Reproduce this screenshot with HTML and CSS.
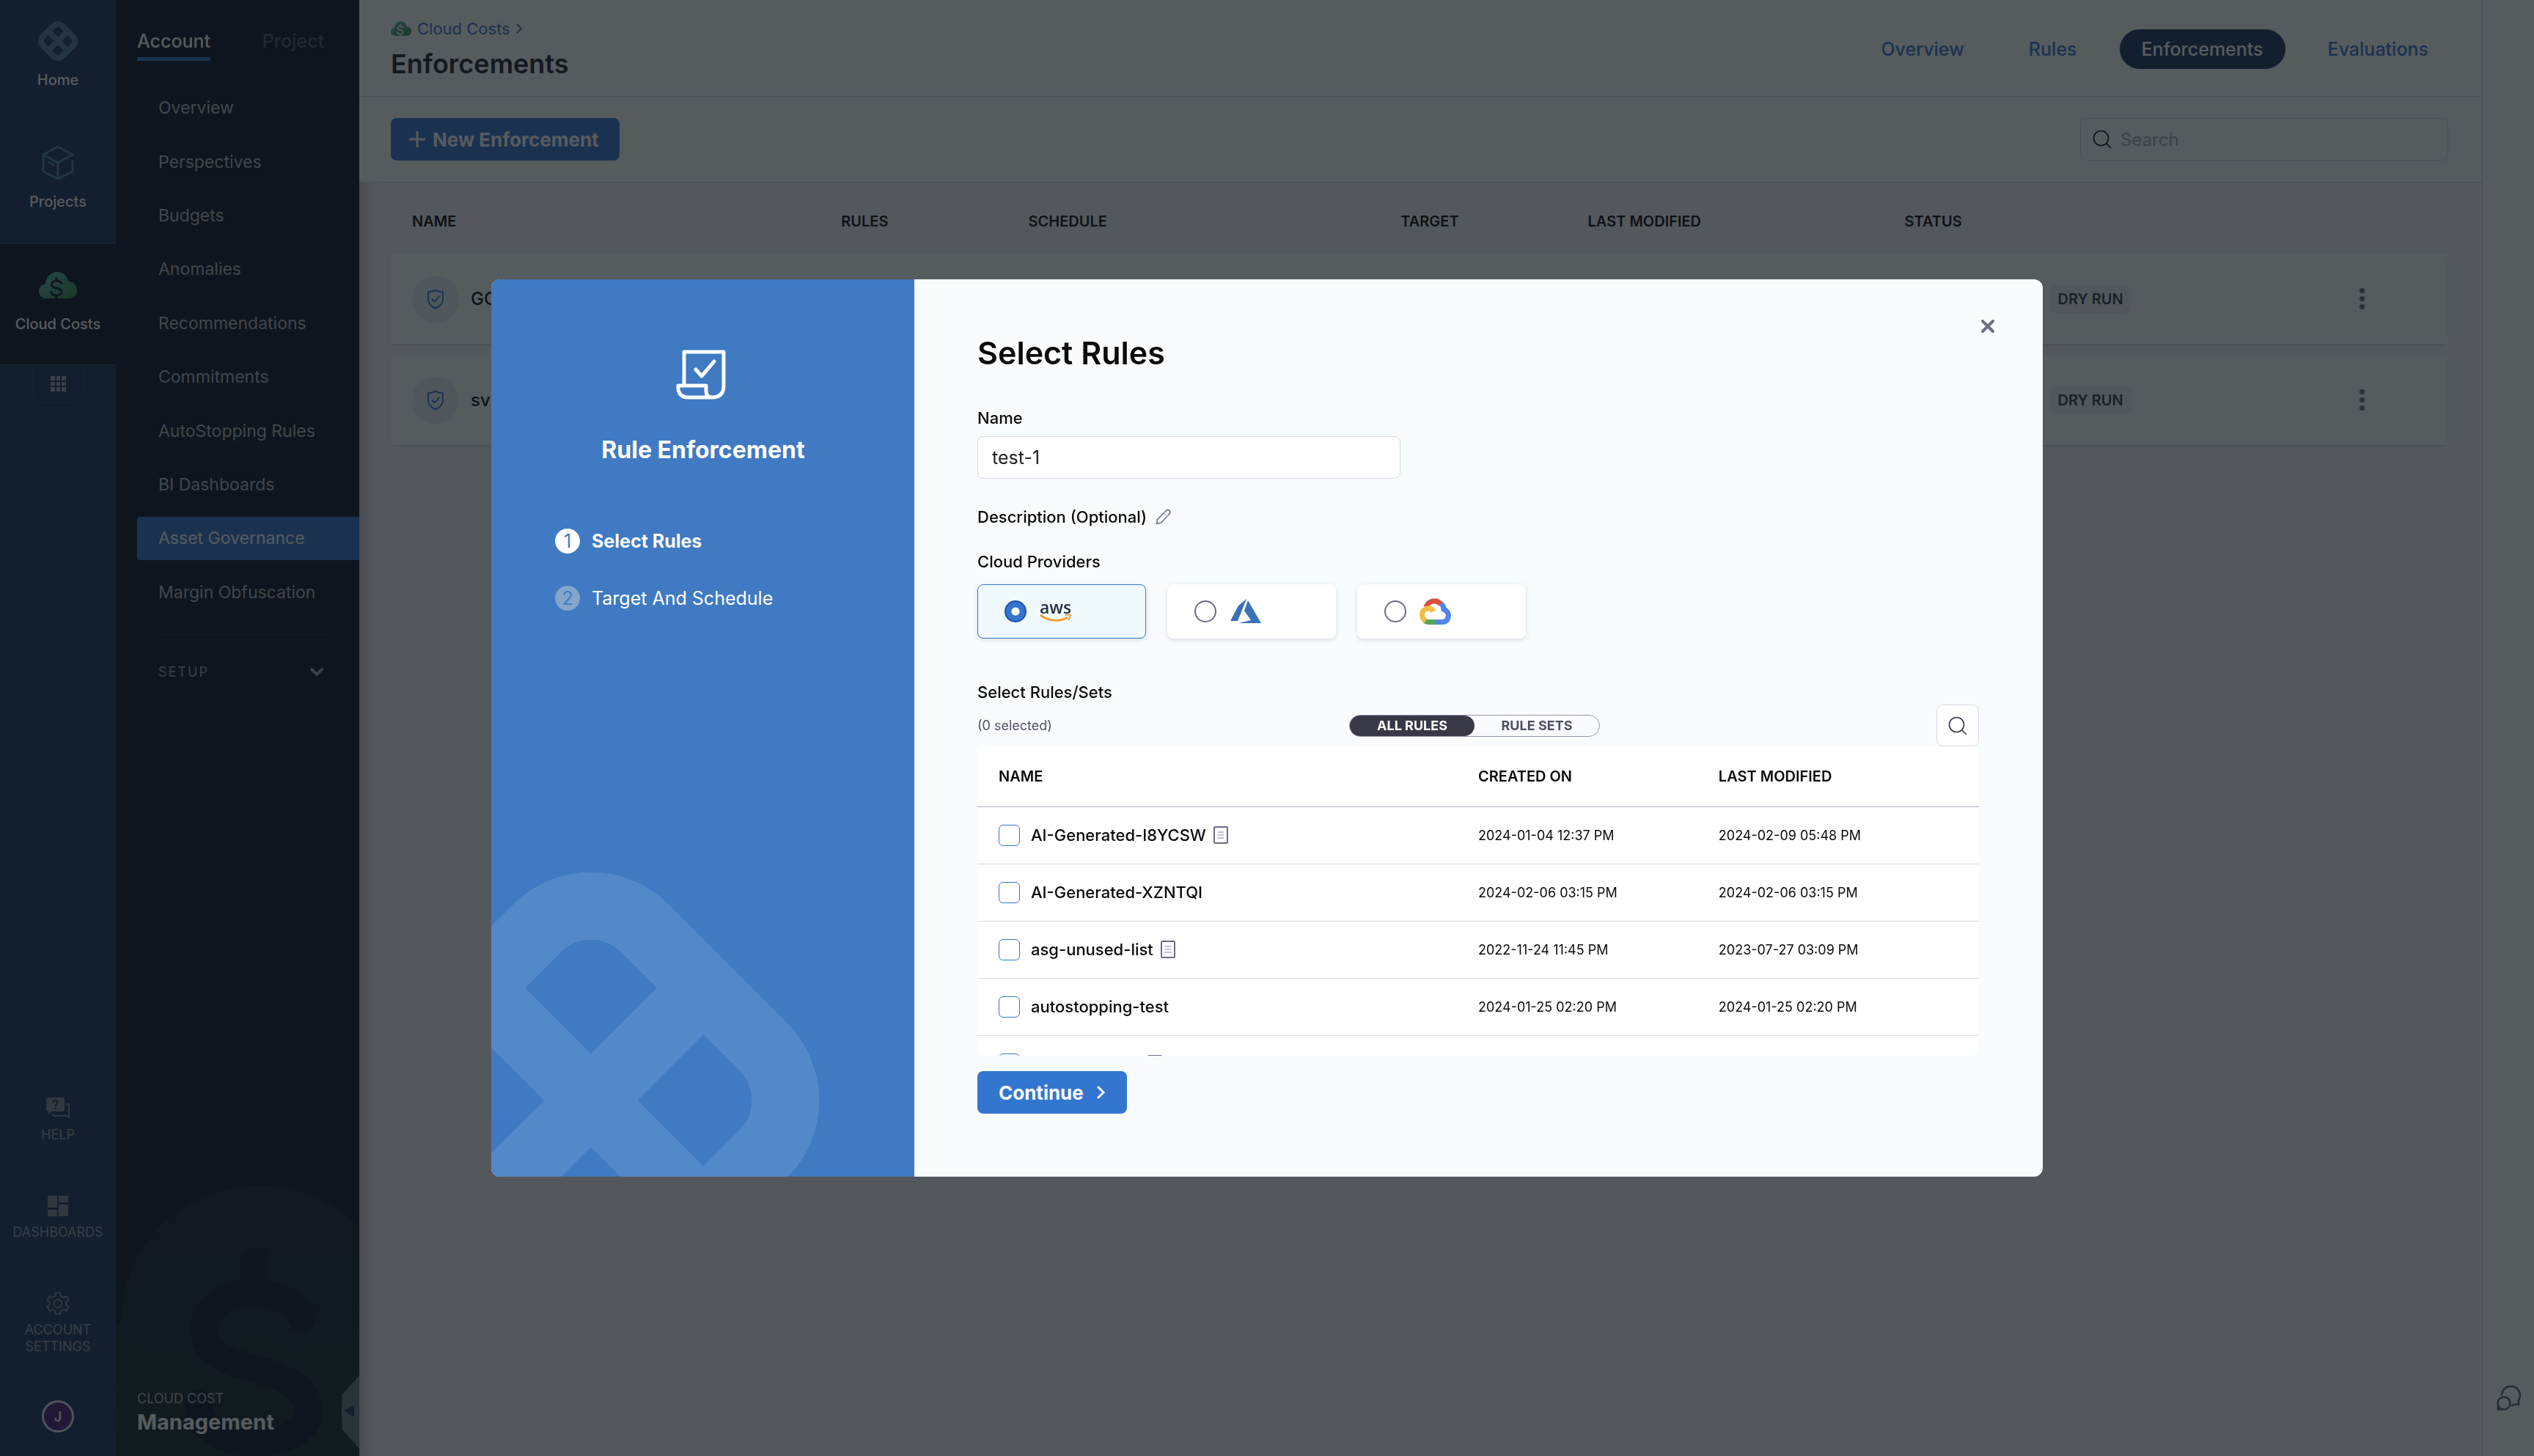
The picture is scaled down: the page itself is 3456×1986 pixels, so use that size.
FILE: index.html
```html
<!DOCTYPE html>
<html lang="en">
<head>
<meta charset="utf-8">
<title>Enforcements</title>
<meta name="viewport" content="width=device-width, initial-scale=1">
<link rel="stylesheet" href="styles.css">
</head>
<body>
<svg class="defs" aria-hidden="true">
  <defs>
    <linearGradient id="cloud-fill" x1="0" y1="0" x2="1" y2="1">
      <stop offset="0" stop-color="#5bbcc4"/><stop offset="1" stop-color="#3a8a44"/>
    </linearGradient>
    <symbol id="logo" viewBox="-312 -312 624 624">
      <g transform="rotate(45)" fill="none" stroke="currentColor">
        <rect x="-218" y="-218" width="436" height="436" rx="104" stroke-width="92"/>
        <path d="M-190 0H190M0-190V190" stroke-width="90"/>
      </g>
    </symbol>
    <symbol id="search" viewBox="0 0 26 26">
      <g fill="none" stroke="currentColor" stroke-width="1.6" stroke-linecap="round"><circle cx="11.500" cy="11.500" r="10"/><path d="M19 19l5.500 5.500"/></g>
    </symbol>
    <symbol id="shield" viewBox="0 0 24 28">
      <g fill="none" stroke="currentColor" stroke-width="2" stroke-linejoin="round" stroke-linecap="round">
        <path d="M12 1.500C9 3.500 5 4.200 2 4.200V14c0 6 4 10 10 12.500C18 24 22 20 22 14V4.200c-3 0-7-.7-10-2.700z"/><path d="M7.500 14l3.500 3.500 6-7.500"/>
      </g>
    </symbol>
    <symbol id="doc" viewBox="0 0 20 24">
      <rect x="1" y="1" width="18" height="22" rx="1" fill="none" stroke="#6b6d85" stroke-width="2"/>
      <path d="M5.500 8h9M5.500 12h9M5.500 16h9" stroke="#c3c4d4" stroke-width="2"/>
    </symbol>
    <symbol id="dollar" viewBox="0 0 18 30">
      <path d="M9 1v5M16 10.500C15 7.500 12 6 9 6c-4 0-6.500 2-6.500 5 0 7 13.500 3.500 13.500 10 0 3-3 5-7 5s-7-2-7.500-5.500M9 26v4" fill="none" stroke="currentColor" stroke-width="3"/>
    </symbol>
  </defs>
</svg>

<div class="app">
  <nav class="rail" aria-label="Modules">
    <a class="module" href="#"><span class="module-icon"><svg class="logo" width="54" height="54"><use href="#logo"/></svg></span>Home</a>
    <a class="module" href="#"><span class="module-icon">
      <svg class="cube" width="44" height="48" viewBox="0 0 44 48"><g fill="none" stroke="currentColor" stroke-width="3" stroke-linejoin="round" stroke-linecap="round"><path d="M42 22v14L22 46 2 36V13L22 2l20 11-20 11L2 13M22 24v22M9 23l7 4"/></g></svg></span>Projects</a>
    <a class="module module-active" href="#"><span class="module-icon">
      <svg width="52" height="36" viewBox="0 0 52 36"><path fill="url(#cloud-fill)" d="M10 36C4 36 0 32 0 26.500 0 21 4 17 9 16.500 9.500 7 16 0 25 0c8 0 13 5 15 12.500C47 13 52 18 52 24.500 52 31 47 36 40 36z"/><svg x="15" y="6" width="18" height="30" color="#0c1729"><use href="#dollar"/></svg></svg></span>Cloud Costs</a>
    <button class="all-modules" aria-label="All modules">
      <svg width="21" height="21" viewBox="0 0 21 21" fill="currentColor"><path d="M0 0h6v6H0zM8 0h5v6H8zM15 0h6v6h-6zM0 8h6v5H0zM8 8h5v5H8zM15 8h6v5h-6zM0 15h6v6H0zM8 15h5v6H8zM15 15h6v6h-6z"/></svg>
    </button>
    <div class="rail-foot">
      <a class="tool" href="#"><span class="tool-icon">
        <svg width="34" height="30" viewBox="0 0 34 30"><path fill="currentColor" fill-rule="evenodd" d="M4 0h19a3 3 0 0 1 3 3v13a3 3 0 0 1-3 3H9l-5 4v-4a3 3 0 0 1-3-3V3a3 3 0 0 1 3-3z"/><path d="M28 9h4v18l-3-2H12c-2 0-2-1-2-3" fill="none" stroke="currentColor" stroke-width="2"/><path d="M10.500 7c0-4 6-4 6-.5 0 2.500-3 2.500-3 5M13.500 13.500v2.500" fill="none" stroke="#1b3260" stroke-width="2"/></svg></span>HELP</a>
      <a class="tool" href="#"><span class="tool-icon">
        <svg width="28" height="28" viewBox="0 0 28 28" fill="currentColor"><path d="M0 0h13v16H0zM15 0h13v9H15zM0 19h13v9H0zM15 12h13v16H15z"/></svg></span>DASHBOARDS</a>
      <a class="tool" href="#"><span class="tool-icon">
        <svg width="32" height="32" viewBox="0 0 32 32"><g fill="none" stroke="currentColor" stroke-width="2" stroke-linejoin="round"><circle cx="16" cy="16" r="5.500"/><path d="M13 1.500h6l1 4.500 3 1.700 4.400-1.400 3 5.200L27 14.500v3l3.400 3-3 5.200L23 24.300 20 26l-1 4.500h-6L12 26l-3-1.700-4.400 1.400-3-5.200 3.400-3v-3l-3.400-3 3-5.200L9 7.700 12 6z"/></g></svg></span>ACCOUNT SETTINGS</a>
      <a class="avatar" href="#">J</a>
    </div>
  </nav>

  <aside class="side">
    <svg class="side-art" viewBox="0 0 332 380" aria-hidden="true">
      <defs><linearGradient id="art-fill" x1="0" y1="0" x2="0" y2="1"><stop offset="0" stop-color="#141f30"/><stop offset="1" stop-color="#142a2e"/></linearGradient></defs>
      <path fill="url(#art-fill)" d="M0 200Q4 201 8 196C8 92 92 12 197 12 250 12 296 32 332 69V380H0z"/>
      <g fill="none" stroke="#0c1729" stroke-width="38" stroke-linecap="round"><path stroke-linejoin="round" d="M189 114V150"/><path d="M254 192C244 166 214 158 187 158 147 158 121 179 121 207 121 244 162 254 192 262 237 274 262 289 262 319 262 344 232 362 187 362 142 362 114 339 113 309"/></g>
    </svg>
    <div class="scope">
      <a class="scope-tab scope-active" href="#">Account</a>
      <a class="scope-tab" href="#">Project</a>
    </div>
    <nav class="menu" aria-label="Cloud Costs">
      <a href="#">Overview</a>
      <a href="#">Perspectives</a>
      <a href="#">Budgets</a>
      <a href="#">Anomalies</a>
      <a href="#">Recommendations</a>
      <a href="#">Commitments</a>
      <a href="#">AutoStopping Rules</a>
      <a href="#">BI Dashboards</a>
      <a class="menu-active" href="#">Asset Governance</a>
      <a href="#">Margin Obfuscation</a>
    </nav>
    <button class="setup"><span>SETUP</span><svg width="20" height="14" viewBox="0 0 20 14"><path d="M3 3l7 7 7-7" fill="none" stroke="currentColor" stroke-width="4" stroke-linecap="round"/></svg></button>
    <div class="side-foot">
      <span class="side-kicker">CLOUD COST</span>
      <span class="side-title">Management</span>
    </div>
    <button class="collapse" aria-label="Collapse navigation">
      <svg width="25" height="100" viewBox="0 0 25 100"><path fill="#697884" d="M25 0L2 26Q0 50 2 74L25 100z"/><path fill="#1b3260" d="M4 48l12-7q2 0 2 2v11q0 2-2 2z"/></svg>
    </button>
  </aside>

  <main class="main">
    <header class="page-head">
      <div>
        <div class="crumbs">
          <svg class="crumb-icon" width="28" height="20" viewBox="0 0 52 36"><path fill="url(#cloud-fill)" d="M10 36C4 36 0 32 0 26.500 0 21 4 17 9 16.500 9.500 7 16 0 25 0c8 0 13 5 15 12.500C47 13 52 18 52 24.500 52 31 47 36 40 36z"/><svg x="15" y="6" width="18" height="30" color="#fff"><use href="#dollar"/></svg></svg>
          <a href="#">Cloud Costs</a>
          <svg width="9" height="14" viewBox="0 0 9 14"><path d="M1 1l6 6-6 6" fill="none" stroke="#6b6d85" stroke-width="2"/></svg>
        </div>
        <h1>Enforcements</h1>
      </div>
      <nav class="tabs" aria-label="Governance">
        <a href="#">Overview</a>
        <a href="#">Rules</a>
        <a class="tab-active" href="#">Enforcements</a>
        <a href="#">Evaluations</a>
      </nav>
    </header>
    <div class="toolbar">
      <button class="btn"><svg width="22" height="22" viewBox="0 0 22 22"><path d="M11 1v20M1 11h20" stroke="currentColor" stroke-width="3" stroke-linecap="round"/></svg>New Enforcement</button>
      <label class="search"><svg width="26" height="26"><use href="#search"/></svg><input type="search" placeholder="Search" aria-label="Search"></label>
    </div>
    <div class="list">
      <table class="enforcements">
        <colgroup><col class="c-name"><col class="c-rules"><col class="c-schedule"><col class="c-target"><col class="c-modified"><col class="c-status"></colgroup>
        <thead><tr><th>NAME</th><th>RULES</th><th>SCHEDULE</th><th>TARGET</th><th>LAST MODIFIED</th><th>STATUS</th></tr></thead>
        <tbody>
          <tr><td><div class="enf-name"><span class="enf-icon"><svg width="24" height="28"><use href="#shield"/></svg></span>GC</div></td><td></td><td></td><td></td><td></td>
            <td><div class="enf-status"><span class="badge">DRY RUN</span><button class="kebab" aria-label="Options"><i></i><i></i><i></i></button></div></td></tr>
          <tr><td><div class="enf-name"><span class="enf-icon"><svg width="24" height="28"><use href="#shield"/></svg></span>sv</div></td><td></td><td></td><td></td><td></td>
            <td><div class="enf-status"><span class="badge">DRY RUN</span><button class="kebab" aria-label="Options"><i></i><i></i><i></i></button></div></td></tr>
        </tbody>
      </table>
    </div>
  </main>

  <aside class="strip">
    <button class="chat" aria-label="Chat"><svg width="34" height="35" viewBox="0 0 34 35"><g fill="none" stroke="currentColor" stroke-width="2.500" stroke-linejoin="round" stroke-linecap="round"><path d="M8 12.500A12.500 12.500 0 1 1 31 20v6q-4-1.500-9 1"/><circle cx="11" cy="24" r="8.500"/><path d="M3 27v5.500h5"/></g></svg></button>
  </aside>
</div>

<div class="backdrop">
  <div class="modal" role="dialog" aria-modal="true" aria-labelledby="step-title">
    <div class="wizard">
      <svg class="wizard-art" viewBox="-312 -312 624 624" aria-hidden="true"><use href="#logo" x="-312" y="-312" width="624" height="624"/></svg>
      <svg class="wizard-icon" width="76" height="68" viewBox="0 0 76 68"><g fill="none" stroke="currentColor" stroke-width="5" stroke-linejoin="round" stroke-linecap="round"><path d="M12 47V3h54v46q0 16-16 16-8 0-8-9v-7H4q-1 16 14 16h34"/><path d="M28 27l8 9 17-20"/></g></svg>
      <h2>Rule Enforcement</h2>
      <ol class="steps">
        <li class="step step-active"><span class="step-no">1</span>Select Rules</li>
        <li class="step"><span class="step-no">2</span>Target And Schedule</li>
      </ol>
    </div>
    <form class="form">
      <button type="button" class="close" aria-label="Close"><svg width="20" height="20" viewBox="0 0 20 20"><path d="M3 3l14 14M17 3L3 17" stroke="currentColor" stroke-width="4" stroke-linecap="round"/></svg></button>
      <h2 id="step-title">Select Rules</h2>
      <label class="label" for="name">Name</label>
      <input class="field" id="name" type="text" value="test-1">
      <div class="label description">Description (Optional)
        <button type="button" class="edit" aria-label="Edit description"><svg width="22" height="22" viewBox="0 0 22 22"><g fill="none" stroke="currentColor" stroke-width="1.600" stroke-linejoin="round"><path d="M1.500 20.500l1-6L15 2q2-1.500 4 .500t.500 4L7.500 19z"/><path d="M12 7l4.500 4" stroke="#c3c4d4"/></g></svg></button>
      </div>
      <fieldset class="providers">
        <legend class="label">Cloud Providers</legend>
        <div class="provider-row">
          <label class="provider"><input type="radio" name="provider" aria-label="AWS" checked>
            <svg width="44" height="36" viewBox="0 0 44 36"><text x="0" y="21" class="aws-word">aws</text><path d="M1 23C13 32 29 32 38 26" fill="none" stroke="#f09a37" stroke-width="3"/><path d="M35 23q4-1 7 0-1 4-3 7" fill="none" stroke="#f09a37" stroke-width="2"/></svg></label>
          <label class="provider"><input type="radio" name="provider" aria-label="Azure">
            <svg width="44" height="36" viewBox="0 0 44 36"><path fill="#3b72b3" d="M23 1L12 10 1 31h10zM25 3l-5 14 9 13-17 4h31z"/></svg></label>
          <label class="provider"><input type="radio" name="provider" aria-label="Google Cloud">
            <svg width="44" height="36" viewBox="0 0 44 36"><g fill="none" stroke-width="7"><path stroke="#d85140" d="M9 12C13 2 24 2 29 8"/><path stroke="#5383ec" d="M29 7q4 3 4 8 6 3 6.500 8Q39 32 31 32.500h-9"/><path stroke="#58a55c" d="M22 32.500H12q-3 0-5-2"/><path stroke="#f1bf42" d="M8.500 31Q3.500 28 3.500 22T11 14q5-1 8 4"/></g></svg></label>
        </div>
      </fieldset>
      <div class="label rules-label">Select Rules/Sets</div>
      <div class="rules-bar">
        <span class="count">(0 selected)</span>
        <div class="toggle"><button type="button" class="toggle-on">ALL RULES</button><button type="button">RULE SETS</button></div>
        <button type="button" class="find" aria-label="Search rules"><svg width="26" height="26"><use href="#search"/></svg></button>
      </div>
      <div class="rules-scroll">
        <table class="rules">
          <colgroup><col class="r-name"><col class="r-created"><col class="r-modified"></colgroup>
          <thead><tr><th>NAME</th><th>CREATED ON</th><th>LAST MODIFIED</th></tr></thead>
          <tbody>
            <tr><td><label class="rule"><input type="checkbox">AI-Generated-I8YCSW <svg width="20" height="24"><use href="#doc"/></svg></label></td><td>2024-01-04 12:37 PM</td><td>2024-02-09 05:48 PM</td></tr>
            <tr><td><label class="rule"><input type="checkbox">AI-Generated-XZNTQI</label></td><td>2024-02-06 03:15 PM</td><td>2024-02-06 03:15 PM</td></tr>
            <tr><td><label class="rule"><input type="checkbox">asg-unused-list <svg width="20" height="24"><use href="#doc"/></svg></label></td><td>2022-11-24 11:45 PM</td><td>2023-07-27 03:09 PM</td></tr>
            <tr><td><label class="rule"><input type="checkbox">autostopping-test</label></td><td>2024-01-25 02:20 PM</td><td>2024-01-25 02:20 PM</td></tr>
            <tr><td><label class="rule"><input type="checkbox" aria-label="Rule"><span class="rule-blank"></span><svg width="20" height="24"><use href="#doc"/></svg></label></td><td></td><td></td></tr>
          </tbody>
        </table>
      </div>
      <button type="button" class="btn btn-continue">Continue<svg width="12" height="18" viewBox="0 0 12 18"><path d="M2 2l7 7-7 7" fill="none" stroke="currentColor" stroke-width="3" stroke-linecap="round"/></svg></button>
    </form>
  </div>
</div>
</body>
</html>
```
FILE: styles.css
```css
:root {
  --primary: #3376cf;
  --navy: #1b3260;
  --ink: #0b0b0d;
  --night: #0c1729;
  --line: #d9dae5;
  --grey: #6b6d85;
}

* { box-sizing: border-box; }

body {
  margin: 0;
  font-family: Inter, "Liberation Sans", sans-serif;
  font-size: 24px;
  color: var(--ink);
  background: #f3f3fa;
}

a { color: inherit; text-decoration: none; }
button { font: inherit; color: inherit; border: 0; padding: 0; background: none; }
input { font: inherit; color: inherit; margin: 0; }
h1, h2 { margin: 0; font-weight: 600; }
svg { display: block; flex: none; }
.defs { position: absolute; width: 0; height: 0; }

.app { display: flex; min-height: 100vh; }

/* Module rail */
.rail {
  flex: 0 0 158px;
  display: flex;
  flex-direction: column;
  align-items: center;
  background: var(--navy);
  color: #fff;
}
.module {
  align-self: stretch;
  height: 166px;
  padding-top: 24px;
  display: flex;
  flex-direction: column;
  align-items: center;
  gap: 9px;
  font-size: 20px;
  font-weight: 500;
  line-height: 24px;
}
.module-icon { height: 64px; display: flex; align-items: center; }
.logo { color: #567c9c; }
.cube { color: #4f8798; }
.module-active { background: var(--night); border-top: 1px solid #30475c; border-bottom: 1px solid #30475c; }
.all-modules {
  width: 68px;
  height: 52px;
  display: grid;
  place-items: center;
  color: #a3a4ae;
  background: #1a2f5a;
  border: 1px solid #30475c;
  border-top: 0;
  border-radius: 0 0 8px 8px;
}
.rail-foot {
  margin-top: auto;
  padding: 0 10px 32px;
  display: flex;
  flex-direction: column;
  align-items: center;
  gap: 70px;
}
.tool {
  display: flex;
  flex-direction: column;
  align-items: center;
  gap: 8px;
  font-size: 18px;
  line-height: 23px;
  text-align: center;
  color: #9a9fae;
}
.tool-icon { height: 32px; display: flex; align-items: center; color: #82879c; }
.avatar {
  width: 44px;
  height: 44px;
  margin-top: -8px;
  display: grid;
  place-items: center;
  font-size: 18px;
  font-weight: 600;
  background: #4c1f7c;
  border: 3px solid #e4e4ea;
  border-radius: 50%;
}

/* Side navigation */
.side {
  position: relative;
  flex: 0 0 332px;
  display: flex;
  flex-direction: column;
  padding-left: 29px;
  background: var(--night);
  color: #b7b9c0;
}
.side-art { position: absolute; left: 0; bottom: 0; width: 332px; height: 380px; }
.scope {
  height: 111px;
  padding: 40px 48px 28px 0;
  display: flex;
  justify-content: space-between;
  align-items: flex-start;
  font-size: 25px;
  line-height: 32px;
  font-weight: 500;
  color: #555666;
}
.scope-tab { padding-bottom: 6px; border-bottom: 5px solid transparent; }
.scope-active { color: #fff; border-color: var(--primary); }
.menu { height: 734px; display: grid; grid-auto-rows: 1fr; align-items: center; font-size: 23px; }
.menu a { height: 59px; padding-left: 29px; line-height: 59px; border-radius: 4px 0 0 4px; }
.menu .menu-active { color: #fff; background: var(--primary); }
.setup {
  margin: 20px 44px 0 29px;
  padding: 39px 4px 0 0;
  display: flex;
  justify-content: space-between;
  align-items: center;
  line-height: 24px;
  font-size: 18px;
  letter-spacing: 2px;
  color: #a3a4ae;
  border-top: 1px solid #1d2a3a;
}
.side-foot { position: relative; margin-top: auto; padding-bottom: 28px; display: flex; flex-direction: column; }
.side-kicker { font-size: 18px; line-height: 28px; }
.side-title { font-size: 29px; line-height: 36px; font-weight: 700; color: #fff; }
.collapse { position: absolute; right: 0; bottom: 10px; }

/* Page */
.main { flex: 1; min-width: 0; box-shadow: inset 24px 0 24px -24px rgba(40, 41, 61, 0.4); }
.page-head {
  height: 132px;
  padding: 0 43px;
  display: flex;
  justify-content: space-between;
  background: #fafdfe;
  border-bottom: 1px solid var(--line);
}
.crumbs { padding-top: 24px; display: flex; align-items: center; gap: 8px; font-size: 22px; line-height: 30px; color: var(--primary); }
h1 { margin-top: 10px; font-size: 36px; line-height: 46px; color: #22222a; }
.tabs { padding-top: 40px; display: flex; gap: 28px; font-size: 25px; font-weight: 500; color: var(--primary); }
.tabs a { height: 54px; padding: 0 30px; line-height: 54px; border-radius: 27px; }
.tabs .tab-active { color: #fff; background: var(--navy); }
.toolbar {
  height: 117px;
  padding: 0 46px 0 43px;
  display: flex;
  justify-content: space-between;
  align-items: center;
  background: #fafdfe;
  border-bottom: 1px solid var(--line);
}
.btn {
  height: 58px;
  padding: 0 28px 0 25px;
  display: flex;
  align-items: center;
  gap: 10px;
  font-size: 26px;
  font-weight: 700;
  color: #fff;
  background: var(--primary);
  border-radius: 8px;
}
.search {
  width: 502px;
  height: 58px;
  padding: 0 16px;
  display: flex;
  align-items: center;
  gap: 12px;
  border: 1px solid var(--line);
  border-radius: 8px;
}
.search input { flex: 1; min-width: 0; padding: 0; border: 0; background: none; }
.search input::placeholder { color: #a5a7b5; opacity: 1; }
.list { padding: 9px 47px 0 43px; }
.enforcements { width: 100%; table-layout: fixed; border-collapse: separate; border-spacing: 0 15px; }
.c-name { width: 21.9%; }
.c-rules { width: 9.1%; }
.c-schedule { width: 18.1%; }
.c-target { width: 9.1%; }
.c-modified { width: 15.4%; }
.c-status { width: 26.4%; }
.enforcements th { height: 58px; padding: 0; font-size: 20px; font-weight: 600; text-align: left; }
.enforcements th:first-child, .enforcements td:first-child { padding-left: 29px; }
.enforcements tbody tr { border-radius: 8px; background: #fafdfe; box-shadow: 0 2px 2px rgba(96, 97, 112, 0.16); }
.enforcements td { height: 123px; padding: 0; }
.enf-name { display: flex; align-items: center; gap: 16px; font-weight: 500; }
.enf-icon { width: 64px; height: 64px; display: grid; place-items: center; color: var(--primary); background: #e6f1f9; border-radius: 50%; }
.enf-status { padding: 0 109px 0 198px; display: flex; justify-content: space-between; align-items: center; }
.badge { padding: 0 11px; font-size: 20px; line-height: 38px; font-weight: 600; color: #383946; background: #f0f0f7; border-radius: 8px; }
.kebab { width: 16px; display: grid; justify-items: center; gap: 4px; }
.kebab i { width: 7px; height: 7px; background: var(--grey); border-radius: 50%; }

.strip { flex: 0 0 71px; padding-bottom: 61px; display: flex; align-items: flex-end; justify-content: center; background: #fafdfe; border-left: 1px solid var(--line); }
.chat { color: #5c5d72; }

/* Dialog */
.backdrop { position: fixed; inset: 0; display: grid; place-items: center; background: rgba(16, 22, 26, 0.7); }
.modal { width: 2116px; max-width: 100%; display: flex; overflow: hidden; background: #f8fcff; border-radius: 12px; }
.wizard {
  position: relative;
  flex: 0 0 577px;
  overflow: hidden;
  padding: 96px 86px 0 87px;
  display: flex;
  flex-direction: column;
  color: #fff;
  background: #3f7ac3;
}
.wizard-art { position: absolute; left: -176px; bottom: -208px; width: 624px; height: 624px; opacity: 0.11; }
.wizard-icon { align-self: center; }
.wizard h2 { margin-top: 49px; font-size: 32px; line-height: 40px; font-weight: 700; text-align: center; }
.steps { list-style: none; margin: 86px 0 0; padding: 0; display: grid; gap: 42px; }
.step { display: flex; align-items: center; gap: 16px; font-size: 25px; line-height: 36px; }
.step-active { font-weight: 700; }
.step-no { width: 34px; height: 34px; line-height: 34px; text-align: center; font-weight: 400; color: #3f7ac3; background: #84a6cb; border-radius: 50%; }
.step-active .step-no { background: #fff; }

.form { position: relative; flex: 1; min-width: 0; padding: 74px 87px 86px 86px; display: flex; flex-direction: column; align-items: stretch; }
.close { position: absolute; right: 65px; top: 54px; color: var(--grey); }
.form h2 { font-size: 43px; line-height: 52px; }
.label { font-size: 22px; line-height: 28px; font-weight: 500; }
.form h2 + .label { margin-top: 49px; }
.field { width: 577px; height: 58px; margin-top: 11px; padding: 0 19px; font-size: 25px; background: #fff; border: 1px solid var(--line); border-radius: 8px; color: #22222a; }
.description { margin-top: 38px; display: flex; align-items: center; gap: 12px; }
.edit { color: var(--grey); }
.providers { margin: 33px 0 0; padding: 0; border: 0; min-width: 0; }
.providers legend { padding: 0; }
.provider-row { margin-top: 17px; display: flex; gap: 29px; }
.provider {
  width: 230px;
  height: 74px;
  padding-left: 36px;
  display: flex;
  align-items: center;
  gap: 18px;
  background: #fff;
  border: 1px solid #fff;
  border-radius: 8px;
  box-shadow: 0 2px 6px rgba(96, 97, 112, 0.2);
}
.provider:has(:checked) { background: #f0fafd; border-color: var(--primary); }
.provider input { appearance: none; width: 30px; height: 30px; border: 2px solid var(--grey); border-radius: 50%; background: #fff; }
.provider input:checked { border-color: #1f4fa5; background: radial-gradient(#fff 5px, var(--primary) 6px); }
.aws-word { font: 600 23px "Open Sans", "Noto Sans", sans-serif; fill: #252f3e; }
.rules-label { margin-top: 59px; }
.rules-bar { margin-top: 3px; display: flex; align-items: center; }
.count { flex: 0 0 507px; font-size: 18px; color: #4f5162; }
.toggle { display: flex; border: 1px solid #9293ab; border-radius: 15px; font-size: 18px; font-weight: 700; color: #4f5162; }
.toggle button { width: 170px; height: 28px; line-height: 28px; border-radius: 14px; }
.toggle .toggle-on { color: #fff; background: #383946; }
.find { width: 58px; height: 57px; margin-left: auto; display: grid; place-items: center; background: #fff; border: 1px solid var(--line); border-radius: 8px; color: #383946; }
.rules-scroll { height: 422px; overflow: hidden; background: #fff; border-radius: 8px; }
.rules { width: 100%; table-layout: fixed; border-collapse: collapse; }
.r-name { width: 50%; }
.r-created { width: 24%; }
.r-modified { width: 26%; }
.rules th { height: 82px; padding: 0; font-size: 20px; font-weight: 600; text-align: left; border-bottom: 1px solid #b0b1c3; }
.rules td { height: 78px; padding: 0; font-size: 18px; border-bottom: 1px solid var(--line); }
.rules th:first-child, .rules td:first-child { padding-left: 29px; }
.rule { display: flex; align-items: center; gap: 10px; font-size: 22px; font-weight: 500; }
.rule input { appearance: none; width: 29px; height: 29px; margin-right: 5px; border: 1px solid var(--primary); border-radius: 6px; background: #fff; }
.rule-blank { width: 149px; }
.btn-continue { align-self: flex-start; margin-top: 21px; padding: 0 29px; gap: 18px; }
```
